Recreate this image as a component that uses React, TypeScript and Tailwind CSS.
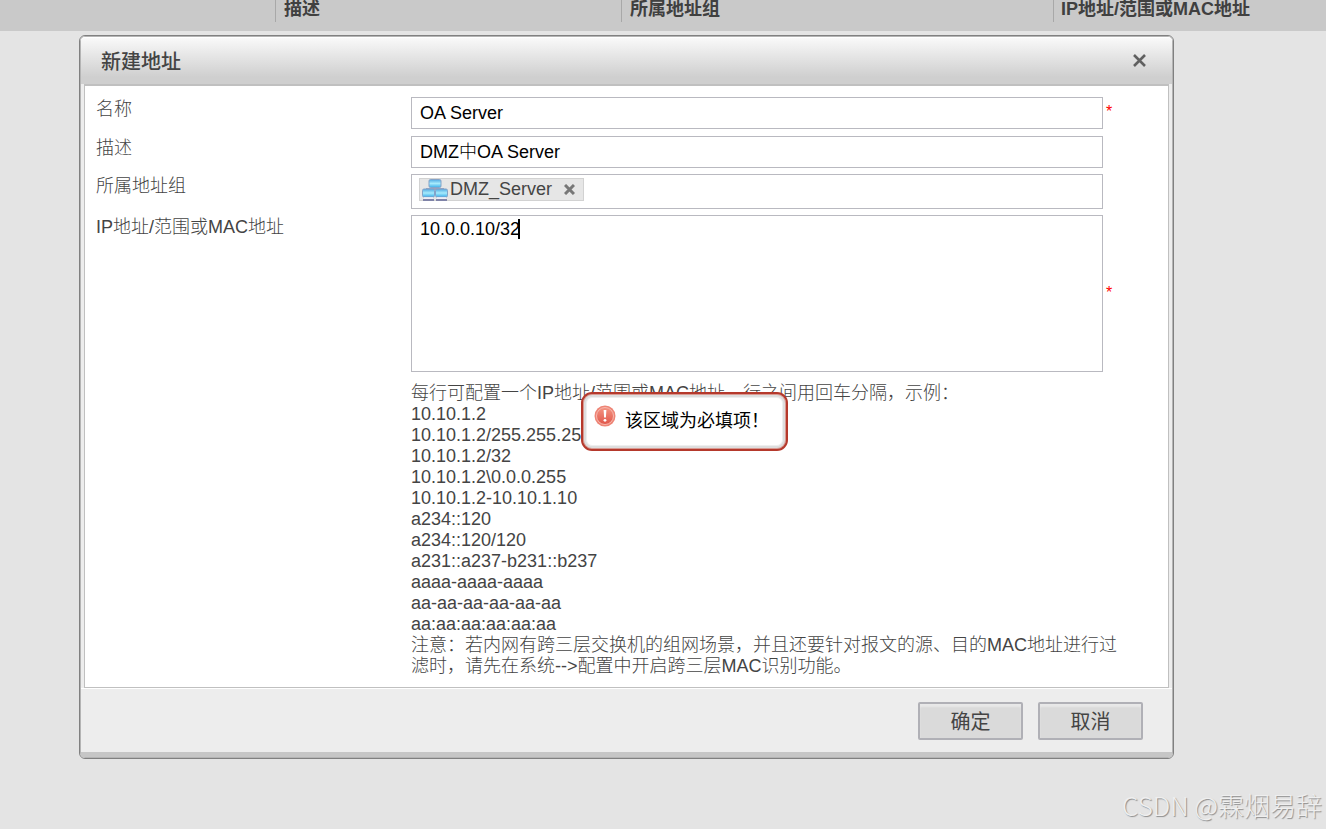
import { useState } from 'react';

const EXAMPLES = [
  '10.10.1.2',
  '10.10.1.2/255.255.255.0',
  '10.10.1.2/32',
  '10.10.1.2\\0.0.0.255',
  '10.10.1.2-10.10.1.10',
  'a234::120',
  'a234::120/120',
  'a231::a237-b231::b237',
  'aaaa-aaaa-aaaa',
  'aa-aa-aa-aa-aa-aa',
  'aa:aa:aa:aa:aa:aa',
];

function Required() {
  return <span className="w-[17px] pb-[2px] pl-[3px] text-base leading-4 text-[#f00]">*</span>;
}

function NetworkIcon() {
  return (
    <svg className="h-[22px] w-[26px]" viewBox="0 0 26 22" aria-hidden="true">
      <defs>
        <linearGradient id="screen" x1="0" y1="0" x2="0" y2="1">
          <stop offset="0" stopColor="#4fa9e2" />
          <stop offset="0.5" stopColor="#a6ebfc" />
          <stop offset="1" stopColor="#3aaeea" />
        </linearGradient>
      </defs>
      <path d="M13 8v3M5 12v-2h16v2" fill="none" stroke="#9aa1bb" strokeWidth="2" />
      <g fill="url(#screen)" stroke="#84a3c9">
        <rect x="7" y="0.5" width="12" height="8" rx="1.5" />
        <rect x="0.5" y="10" width="12" height="8" rx="1.5" />
        <rect x="13.5" y="10" width="12" height="8" rx="1.5" />
      </g>
      <path d="M2 19h9M15 19h9" stroke="#f0f1fa" strokeWidth="1.5" />
      <path d="M1 21h11M14 21h11" stroke="#7f83a8" strokeWidth="2" />
    </svg>
  );
}

function ErrorTip() {
  return (
    <div
      role="alert"
      className="absolute left-[170px] top-[9px] flex h-[59px] w-[207px] rounded-[11px] border-2 border-[#b5392c] bg-[#dedede] p-[3px] text-lg font-normal leading-6 text-black ring-1 ring-inset ring-[#d99a92]"
    >
      <div className="flex flex-1 rounded-[6px] border border-[#efefef] bg-white pl-[7px] pt-[7px]">
        <svg className="h-[22px] w-[22px]" viewBox="0 0 22 22" aria-hidden="true">
          <defs>
            <linearGradient id="alert" x1="0" y1="0" x2="0" y2="1">
              <stop offset="0" stopColor="#f49482" />
              <stop offset="1" stopColor="#e0564a" />
            </linearGradient>
          </defs>
          <circle cx="11" cy="11" r="10.5" fill="#ee8576" />
          <circle cx="11" cy="11" r="8.5" fill="url(#alert)" stroke="#f7b8ae" />
          <path d="M9.6 5h2.8l-.5 7.5h-1.8z" fill="#fff" />
          <circle cx="11" cy="15.3" r="1.4" fill="#fff" />
        </svg>
        <span className="whitespace-nowrap pl-[9px] pt-1">该区域为必填项！</span>
      </div>
    </div>
  );
}

function BackgroundTable() {
  return (
    <table className="w-full table-fixed bg-[#c9c9c9] text-left text-lg leading-[18px] text-[#404040]">
      <thead>
        <tr className="h-[31px] align-top">
          <th className="w-[275px]"></th>
          <th className="w-[346px] p-0">
            <div className="h-[22px] border-l border-[#a8a8a8] pl-2">描述</div>
          </th>
          <th className="w-[432px] p-0">
            <div className="h-[22px] border-l border-[#a8a8a8] pl-2">所属地址组</div>
          </th>
          <th className="p-0">
            <div className="h-[22px] border-l border-[#a8a8a8] pl-[7px]">IP地址/范围或MAC地址</div>
          </th>
        </tr>
      </thead>
    </table>
  );
}

export default function App() {
  const [name, setName] = useState('OA Server');
  const [desc, setDesc] = useState('DMZ中OA Server');
  const [addresses, setAddresses] = useState('10.0.0.10/32');

  return (
    <div className="relative min-h-screen overflow-hidden bg-[#e4e4e4] font-['Liberation_Sans','Noto_Sans_CJK_SC',sans-serif] text-lg font-light text-[#444]">
      <BackgroundTable />

      <section
        role="dialog"
        aria-labelledby="dialog-title"
        className="ml-[79px] mr-[152px] mt-1 overflow-hidden rounded-md border border-[#808080] bg-[#ededed]"
      >
        <div className="rounded-[5px] border border-[#b4b4b4]">
          <header className="flex h-[47px] items-center justify-between rounded-t-sm border-t border-white bg-linear-to-b from-[#f9f9f9] to-[#cfcfcf] to-85% pl-5 pr-[26px]">
            <h2 id="dialog-title" className="pt-px text-xl font-medium">
              新建地址
            </h2>
            <button type="button" aria-label="关闭" className="pb-[2px]">
              <svg className="h-[13px] w-[13px]" viewBox="0 0 13 13" fill="none" stroke="#606060" strokeWidth="2.6">
                <path d="M1 1l11 11M12 1L1 12" />
              </svg>
            </button>
          </header>

          <form onSubmit={(e) => e.preventDefault()}>
            <div className="mx-[3px] grid grid-cols-[315px_1fr] gap-y-[6px] border border-t-2 border-[#c0c0c0] bg-white pb-[10px] pl-[11px] pr-[48px] pt-[11px] leading-6">
              <label htmlFor="name">名称</label>
              <div className="mb-px flex items-center">
                <input
                  id="name"
                  className="h-8 min-w-0 flex-1 border border-[#b9b9c0] px-2 text-black"
                  value={name}
                  onChange={(e) => setName(e.target.value)}
                />
                <Required />
              </div>

              <label htmlFor="desc">描述</label>
              <div className="mr-[17px] flex">
                <input
                  id="desc"
                  className="h-8 min-w-0 flex-1 border border-[#b9b9c0] px-2 pb-1 text-black"
                  value={desc}
                  onChange={(e) => setDesc(e.target.value)}
                />
              </div>

              <span>所属地址组</span>
              <div className="mr-[17px] flex h-[35px] items-start border border-[#b9b9c0] px-[7px] py-[3px]">
                <span className="flex h-[23px] items-center border border-[#d2d2d2] bg-[#e6e6e6] pl-[2px] pr-2 leading-5">
                  <NetworkIcon />
                  <span className="pb-[2px] pl-[2px]">DMZ_Server</span>
                  <button type="button" aria-label="移除" className="ml-3">
                    <svg className="h-[11px] w-[11px]" viewBox="0 0 11 11" fill="none" stroke="#777" strokeWidth="3">
                      <path d="M1 1l9 9M10 1l-9 9" />
                    </svg>
                  </button>
                </span>
              </div>

              <label htmlFor="addresses">IP地址/范围或MAC地址</label>
              <div>
                <div className="relative flex items-center">
                  <textarea
                    id="addresses"
                    className="h-[157px] min-w-0 flex-1 resize-none border border-[#b9b9c0] px-2 py-[3px] leading-[21px] text-black"
                    value={addresses}
                    onChange={(e) => setAddresses(e.target.value)}
                  />
                  <span className="absolute left-[107px] top-1 h-5 w-[2px] bg-black" />
                  <Required />
                </div>

                <div className="relative mt-[11px] leading-[21px]">
                  <p>每行可配置一个IP地址/范围或MAC地址，行之间用回车分隔，示例：</p>
                  {EXAMPLES.map((line) => (
                    <p key={line}>{line}</p>
                  ))}
                  <p>
                    注意：若内网有跨三层交换机的组网场景，并且还要针对报文的源、目的MAC地址进行过滤时，请先在系统--&gt;配置中开启跨三层MAC识别功能。
                  </p>
                  <ErrorTip />
                </div>
              </div>
            </div>

            <footer className="flex justify-end gap-[15px] border-b-5 border-t border-b-[#c6c6c6] border-t-white pb-3 pr-[29px] pt-[13px] text-xl font-normal">
              <button
                type="submit"
                className="h-[38px] w-[105px] rounded-xs border-2 border-[#b0b0b6] bg-[#dadada] pt-[2px] shadow-[inset_0_3px_2px_#e8e8e8]"
              >
                确定
              </button>
              <button
                type="button"
                className="h-[38px] w-[105px] rounded-xs border-2 border-[#b0b0b6] bg-[#dadada] pt-[2px] shadow-[inset_0_3px_2px_#e8e8e8]"
              >
                取消
              </button>
            </footer>
          </form>
        </div>
      </section>

      <div className="absolute bottom-[6px] right-1 font-['Noto_Sans_CJK_SC',sans-serif] text-[26px] leading-9 text-[#efefef] [text-shadow:1px_1px_1px_#8c8c8c]">
        CSDN @霖烟易辞
      </div>
    </div>
  );
}
